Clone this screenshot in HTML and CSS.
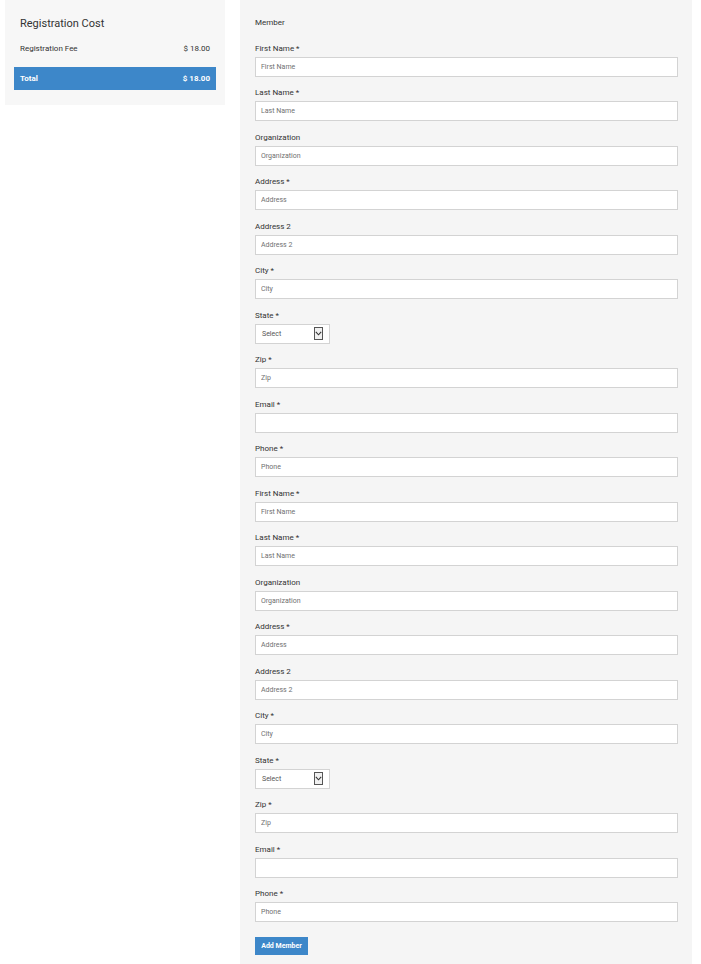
FILE: index.html
```html
<!DOCTYPE html>
<html>
<head>
<meta charset="utf-8">
<link rel="stylesheet" href="styles.css">
</head>
<body>
<div class="page">
  <aside class="cost-card">
    <div class="cost-title">Registration Cost</div>
    <div class="cost-row"><span>Registration Fee</span><span>$ 18.00</span></div>
    <div class="cost-total"><span>Total</span><span>$ 18.00</span></div>
  </aside>
  <main class="member-panel">
    <div class="member-title">Member</div>

    <div class="field"><label>First Name *</label><input class="inp" placeholder="First Name"></div>
    <div class="field"><label>Last Name *</label><input class="inp" placeholder="Last Name"></div>
    <div class="field"><label>Organization</label><input class="inp" placeholder="Organization"></div>
    <div class="field"><label>Address *</label><input class="inp" placeholder="Address"></div>
    <div class="field"><label>Address 2</label><input class="inp" placeholder="Address 2"></div>
    <div class="field"><label>City *</label><input class="inp" placeholder="City"></div>
    <div class="field"><label>State *</label>
      <div class="select"><span>Select</span><span class="arrow"><svg width="7" height="5" viewBox="0 0 7 5"><path d="M0.8 0.8 L3.5 3.8 L6.2 0.8" fill="none" stroke="#333" stroke-width="1.1"/></svg></span></div>
    </div>
    <div class="field"><label>Zip *</label><input class="inp" placeholder="Zip"></div>
    <div class="field"><label>Email *</label><input class="inp"></div>
    <div class="field"><label>Phone *</label><input class="inp" placeholder="Phone"></div>

    <div class="field"><label>First Name *</label><input class="inp" placeholder="First Name"></div>
    <div class="field"><label>Last Name *</label><input class="inp" placeholder="Last Name"></div>
    <div class="field"><label>Organization</label><input class="inp" placeholder="Organization"></div>
    <div class="field"><label>Address *</label><input class="inp" placeholder="Address"></div>
    <div class="field"><label>Address 2</label><input class="inp" placeholder="Address 2"></div>
    <div class="field"><label>City *</label><input class="inp" placeholder="City"></div>
    <div class="field"><label>State *</label>
      <div class="select"><span>Select</span><span class="arrow"><svg width="7" height="5" viewBox="0 0 7 5"><path d="M0.8 0.8 L3.5 3.8 L6.2 0.8" fill="none" stroke="#333" stroke-width="1.1"/></svg></span></div>
    </div>
    <div class="field"><label>Zip *</label><input class="inp" placeholder="Zip"></div>
    <div class="field"><label>Email *</label><input class="inp"></div>
    <div class="field last"><label>Phone *</label><input class="inp" placeholder="Phone"></div>

    <button class="add-btn">Add Member</button>
  </main>
</div>
</body>
</html>
```

FILE: styles.css
```css
* { box-sizing: border-box; }
html, body { margin: 0; padding: 0; background: #fff; }
body {
  font-family: Roboto, "Liberation Sans", Arial, sans-serif;
  color: #222;
}
.page {
  display: flex;
  align-items: flex-start;
  height: 964px;
  overflow: hidden;
}
.cost-card {
  margin-left: 5px;
  width: 220px;
  height: 105px;
  background: #f7f7f7;
  padding: 16px 9px 0 9px;
}
.cost-title {
  font-size: 11px;
  line-height: 16px;
  padding-left: 6px;
  color: #333;
}
.cost-row {
  display: flex;
  justify-content: space-between;
  font-size: 8px;
  line-height: 12px;
  padding: 0 6px;
  margin-top: 11px;
  color: #333;
}
.cost-total {
  display: flex;
  justify-content: space-between;
  align-items: center;
  margin-top: 12px;
  height: 23px;
  background: #3d87c9;
  color: #fff;
  font-weight: bold;
  font-size: 8px;
  padding: 0 6px;
}
.member-panel {
  margin-left: 15px;
  width: 452px;
  height: 964px;
  background: #f5f5f5;
  padding: 17px 15px 0 15px;
}
.member-title {
  font-size: 8px;
  line-height: 12px;
  margin-bottom: 13.5px;
  color: #333;
}
.field {
  display: flex;
  flex-direction: column;
  align-items: flex-start;
  margin-bottom: 10.5px;
}
.field.last { margin-bottom: 15px; }
.field label {
  font-size: 8px;
  font-weight: 400;
  line-height: 12px;
  margin-bottom: 2px;
  color: #333;
}
.inp {
  display: block;
  width: 423px;
  height: 20px;
  border: 1px solid #d3d3d3;
  background: #fff;
  padding: 0 5px;
  font-family: Roboto, "Liberation Sans", Arial, sans-serif;
  font-size: 7px;
  outline: none;
  margin: 0;
}
.inp::placeholder { color: #707070; }
.select {
  width: 75px;
  height: 20px;
  border: 1px solid #d3d3d3;
  background: #fff;
  display: flex;
  align-items: center;
  justify-content: space-between;
  padding: 0 6px 0 6px;
  font-size: 7px;
  color: #555;
}
.select .arrow {
  width: 9px;
  height: 13px;
  border: 1px solid #555;
  background: #f0f0f0;
  display: flex;
  align-items: center;
  justify-content: center;
}
.add-btn {
  display: block;
  width: 53px;
  height: 18px;
  border: none;
  background: #3d87c9;
  color: #fff;
  font-family: Roboto, "Liberation Sans", Arial, sans-serif;
  font-weight: bold;
  font-size: 7px;
  padding: 0;
  margin: 0;
}
```
